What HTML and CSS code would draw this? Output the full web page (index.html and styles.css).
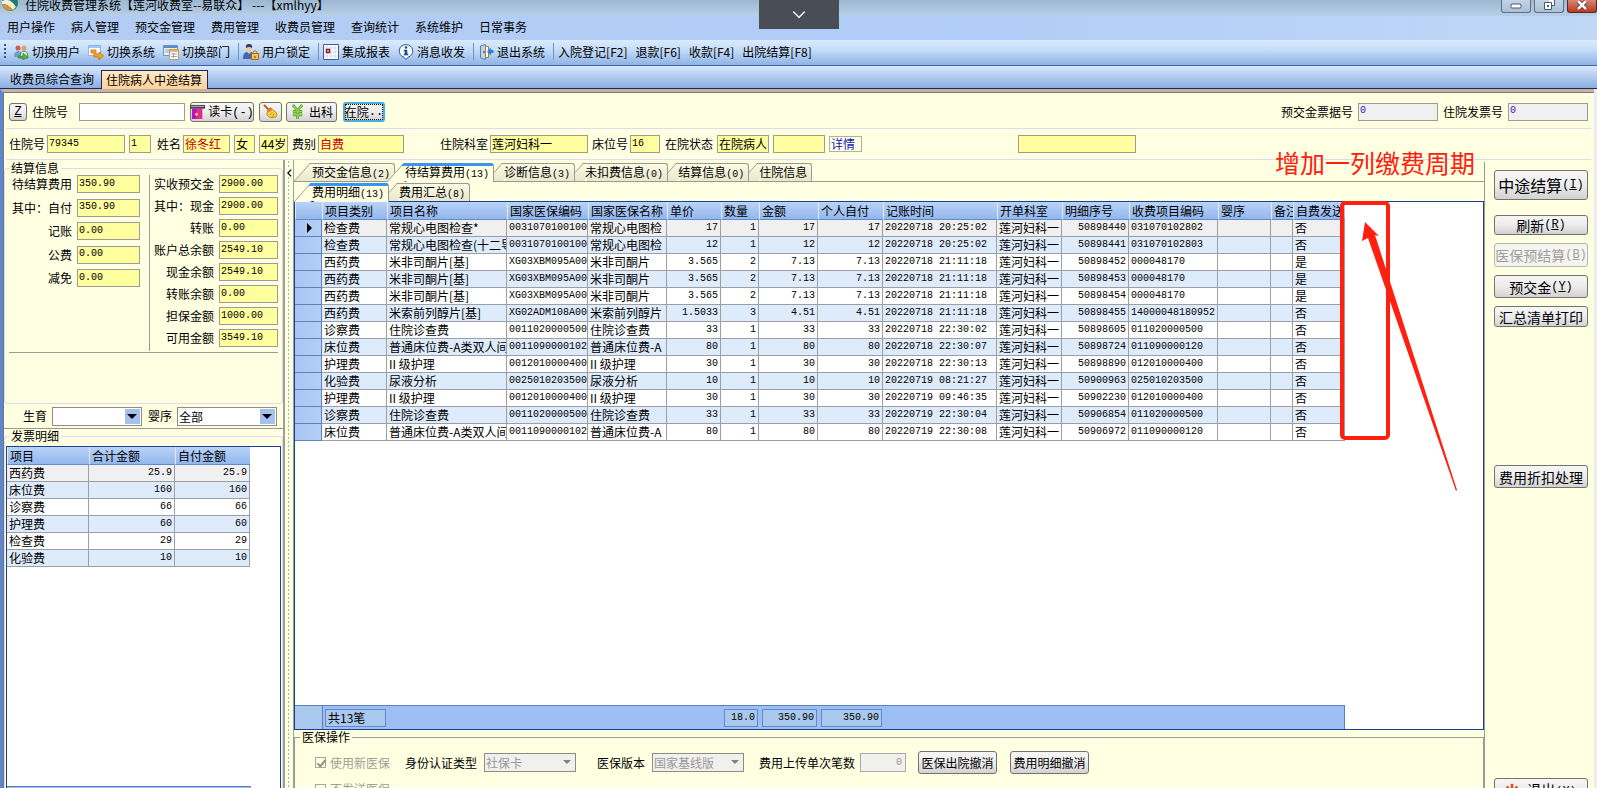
FILE: index.html
```html
<!DOCTYPE html>
<html lang="zh-CN">
<head>
<meta charset="utf-8">
<title>住院收费管理系统</title>
<link rel="stylesheet" href="styles.css">
</head>
<body>
<div class="app">
<header class="titlebar">
  <svg class="logo" viewBox="0 0 16 16"><circle cx="8" cy="8" r="8" fill="#1d7d62"/><path d="M0 6Q8 2 14 12L11 15Q5 8 0 9Z" fill="#f3efd4"/><path d="M0 9Q6 9 11 15Q3 18 0 9Z" fill="#e08f30"/></svg>
  <span class="title">住院收费管理系统【莲河收费室--易联众】 ---【xmlhyy】</span>
  <div class="winbtns">
    <button class="win" aria-label="最小化"><svg viewBox="0 0 16 12"><rect x="3" y="5" width="10" height="4" rx="1" fill="#fff" stroke="#4b5866"/></svg></button>
    <button class="win" aria-label="还原"><svg viewBox="0 0 16 12"><path d="M7.500 .5h6v6h-3" fill="#fff" stroke="#4b5866"/><path d="M3.500 3.500h7v7h-7z" fill="#fff" stroke="#4b5866"/><path d="M6 6h2v2h-2z" fill="#4b5866"/></svg></button>
    <button class="win close" aria-label="关闭"><svg viewBox="0 0 16 12"><path d="M4 2l8 8M12 2l-8 8" stroke="#5d2a22" stroke-width="4"/><path d="M4 2l8 8M12 2l-8 8" stroke="#fff" stroke-width="2.500"/></svg></button>
  </div>
</header>
<button class="handle" aria-label="展开"><svg viewBox="0 0 12 8"><path d="M1 1l5 5 5-5" fill="none" stroke="#e8eaec" stroke-width="1.300"/></svg></button>
<nav class="menubar"><a href="#">用户操作</a><a href="#">病人管理</a><a href="#">预交金管理</a><a href="#">费用管理</a><a href="#">收费员管理</a><a href="#">查询统计</a><a href="#">系统维护</a><a href="#">日常事务</a></nav>
<div class="toolbar">
  <span class="grip"></span>
  <button><svg viewBox="0 0 16 16"><circle cx="5" cy="4" r="2.500" fill="#d95b43"/><path d="M1 13q0-6 4-6t4 6z" fill="#6f9fd0"/><circle cx="11" cy="4" r="2.500" fill="#e0a070"/><path d="M7 14q0-7 4-7t4 7z" fill="#eee" stroke="#4c8b45"/><path d="M5 12h5v-3l5 4-5 3v-2H5z" fill="#4fb144" stroke="#277024" stroke-width=".5"/></svg>切换用户</button>
  <button><svg viewBox="0 0 16 16"><path d="M.5 1.500h12v10H.5z" fill="#fff" stroke="#8ab8e8"/><path d="M1 2h11v2H1z" fill="#9cc7f3"/><path d="M3 6h5v4h3V8l4.500 4-4.500 4v-3H6V9H3z" fill="#f7a823" stroke="#c26a10" stroke-width=".8"/></svg>切换系统</button>
  <button><svg viewBox="0 0 16 16"><path d="M.5 1.500h14v10H.5z" fill="#e8f0fa" stroke="#6c93c8"/><path d="M1 2h13v2H1z" fill="#5b8ad0"/><path d="M2 6h5M2 8h5" stroke="#8aa9d2"/><path d="M6.500 5.500h9v10h-9z" fill="#fff" stroke="#c19a55"/><path d="M7 6h8v2H7z" fill="#f3b65b"/><path d="M8 10h6M8 12.500h6M10.500 9v5" stroke="#93a7bf"/></svg>切换部门</button>
  <i class="sep"></i>
  <button><svg viewBox="0 0 16 16"><path d="M3 3q0-3 3-3t3 3v3q-1 2-3 2T3 6z" fill="#f1c9a0"/><path d="M3 4q-1-4 3-4t3 4q-3-2-6 0" fill="#35405c"/><path d="M0 15q0-7 4-7l2 2 2-2q3 0 4 7z" fill="#4169b0"/><path d="M10 10V8q2-3 4 0v2" fill="none" stroke="#b87b18"/><path d="M8.500 9.500h7v6h-7z" fill="#f6c052" stroke="#a96815"/><path d="M12 12v2" stroke="#5e3a0b"/></svg>用户锁定</button>
  <i class="sep"></i>
  <button><svg viewBox="0 0 16 16"><path d="M.5.5h15v15H.5z" fill="#fff" stroke="#4858a0"/><path d="M1 4h14M1 8h14M1 12h14M4 1v14M8 1v14M12 1v14" stroke="#b8c8ea" stroke-width=".6"/><path d="M3.500 5.500h3v3h-3z" fill="#fff" stroke="#802020" stroke-width="1.500"/></svg>集成报表</button>
  <button><svg viewBox="0 0 16 16"><path d="M8 .7a6.800 6.400 0 0 1 2 12.500L8 15.500l-2-2.300A6.800 6.400 0 0 1 8 .7z" fill="#f8fbff" stroke="#28579d"/><circle cx="8" cy="3.500" r="1.300" fill="#1d4da0"/><path d="M6 6h3v4h1v1H6v-1h1V7H6z" fill="#1d4da0" stroke="#1d4da0" stroke-width=".6"/></svg>消息收发</button>
  <i class="sep"></i>
  <button><svg viewBox="0 0 16 16"><path d="M2.500 2l5-1.500v15L2.500 14z" fill="#bcd5f1" stroke="#607fa8"/><path d="M7.500 2.500h3v11h-3z" fill="#fff" stroke="#b4772b"/><circle cx="6" cy="8" r="1" fill="#496b94"/><path d="M15.500 6v3H13v2.500L9 7.500l4-4V6z" fill="#2584df"/></svg>退出系统</button>
  <i class="sep"></i>
  <button>入院登记[F2]</button><button>退款[F6]</button><button>收款[F4]</button><button>出院结算[F8]</button>
</div>
<div class="doctabs"><button>收费员综合查询</button><button class="on">住院病人中途结算</button></div>

<main class="page">
<section class="row search">
  <button class="btn z"><u>Z</u></button>
  <label for="zyh">住院号</label><input id="zyh" class="white w106">
  <button class="btn read"><svg viewBox="0 0 16 16"><path d="M0 1h16v4H0z" fill="#444"/><path d="M1 2h14v1H1z" fill="#bbb"/><path d="M2 5h11v11H2z" fill="#b312c8"/><path d="M7 5h6v11H7z" fill="#e32a86"/><path d="M7 9l2 2-2 2-2-2z" fill="#ffc84a"/></svg><span>读卡<span class="k">(-)</span></span></button>
  <button class="btn broom" aria-label="清除"><svg viewBox="0 0 16 16"><path d="M1 1l5 5" stroke="#a85a20" stroke-width="2"/><path d="M5 6l3-2 6 5q2 4-1 5-6 2-9-3z" fill="#f5d040" stroke="#b88718"/><path d="M5 6l3-2 2 2-4 3z" fill="#e47b34"/><path d="M7 12l3-3M10 14l2-4" stroke="#c7981c"/></svg></button>
  <button class="btn out"><svg viewBox="0 0 16 16"><path d="M3 1l5 6 5-6M3 8h10M3 11.500h10M8 7v9" fill="none" stroke="#5aa52c" stroke-width="3"/><path d="M3 1l5 6 5-6M3 8h10M3 11.500h10M8 7v9" fill="none" stroke="#8dd24e" stroke-width="1.500"/></svg>出科</button>
  <button class="btn inhos">在院<span class="k">..</span></button>
  <div class="receipt">
    <label for="yj">预交金票据号</label><input id="yj" class="gray w80 num" value="0">
    <label for="fp">住院发票号</label><input id="fp" class="gray w80 num" value="0">
  </div>
</section>
<section class="row patient">
  <label for="p1">住院号</label><input id="p1" class="w78 num" value="79345" readonly>
  <input class="w22 num" value="1" aria-label="次数" readonly>
  <label for="p2" class="name">姓名</label><input id="p2" class="w47 red" value="徐冬红" readonly>
  <input class="w21" value="女" aria-label="性别" readonly>
  <input class="w29" value="44岁" aria-label="年龄" readonly>
  <label for="p3">费别</label><input id="p3" class="w86 red" value="自费" readonly>
  <label for="p4" class="dept">住院科室</label><input id="p4" class="w98" value="莲河妇科一" readonly>
  <label for="p5">床位号</label><input id="p5" class="w30 num" value="16" readonly>
  <label for="p6" class="state">在院状态</label><input id="p6" class="w52" value="在院病人" readonly>
  <input class="w52" aria-label="备注" readonly>
  <a class="detail" href="#">详情</a>
  <input class="w118 extra" aria-label="其他" readonly>
</section>

<div class="work">
<aside class="left">
  <fieldset class="info"><legend>结算信息</legend>
    <div class="sums">
      <div class="col five">
        <label for="a1">待结算费用</label><input id="a1" value="350.90" readonly>
        <label for="a2">其中：自付</label><input id="a2" value="350.90" readonly>
        <label for="a3">记账</label><input id="a3" value="0.00" readonly>
        <label for="a4">公费</label><input id="a4" value="0.00" readonly>
        <label for="a5">减免</label><input id="a5" value="0.00" readonly>
      </div>
      <div class="col eight">
        <label for="b1">实收预交金</label><input id="b1" value="2900.00" readonly>
        <label for="b2">其中：现金</label><input id="b2" value="2900.00" readonly>
        <label for="b3">转账</label><input id="b3" value="0.00" readonly>
        <label for="b4">账户总余额</label><input id="b4" value="2549.10" readonly>
        <label for="b5">现金余额</label><input id="b5" value="2549.10" readonly>
        <label for="b6">转账余额</label><input id="b6" value="0.00" readonly>
        <label for="b7">担保金额</label><input id="b7" value="1000.00" readonly>
        <label for="b8">可用金额</label><input id="b8" value="3549.10" readonly>
      </div>
    </div>
  </fieldset>
  <div class="filters">
    <label for="sy">生育</label><span class="sel s90"><select id="sy"><option></option></select></span>
    <label for="yx">婴序</label><span class="sel s100"><select id="yx"><option>全部</option></select></span>
  </div>
  <fieldset class="invoice"><legend>发票明细</legend>
    <div class="box">
      <table class="grid small">
        <colgroup><col class="i1"><col class="i2"><col class="i3"></colgroup>
        <thead><tr><th>项目</th><th>合计金额</th><th>自付金额</th></tr></thead>
        <tbody>
        <tr><td>西药费</td><td class="r">25.9</td><td class="r">25.9</td></tr>
        <tr><td>床位费</td><td class="r">160</td><td class="r">160</td></tr>
        <tr><td>诊察费</td><td class="r">66</td><td class="r">66</td></tr>
        <tr><td>护理费</td><td class="r">60</td><td class="r">60</td></tr>
        <tr><td>检查费</td><td class="r">29</td><td class="r">29</td></tr>
        <tr><td>化验费</td><td class="r">10</td><td class="r">10</td></tr>
        </tbody>
      </table>
      <div class="smallfoot"></div>
    </div>
  </fieldset>
</aside>
<div class="splitter"><svg viewBox="0 0 6 8"><path d="M5 0L1 4l4 4" fill="none" stroke="#000" stroke-width="1.500"/></svg></div>
<section class="center">
  <div class="tabs">
    <button class="tab t1">预交金信息<span class="n">(2)</span></button><button class="tab t2 on">待结算费用<span class="n">(13)</span></button><button class="tab t3">诊断信息<span class="n">(3)</span></button><button class="tab t4">未扣费信息<span class="n">(0)</span></button><button class="tab t5">结算信息<span class="n">(0)</span></button><button class="tab t6">住院信息</button>
  </div>
  <div class="tabs sub">
    <button class="tab t1 on">费用明细<span class="n">(13)</span></button><button class="tab t3">费用汇总<span class="n">(8)</span></button>
  </div>
  <div class="box main">
    <table class="grid">
      <colgroup><col class="c0"><col class="c1"><col class="c2"><col class="c3"><col class="c4"><col class="c5"><col class="c6"><col class="c7"><col class="c8"><col class="c9"><col class="c10"><col class="c11"><col class="c12"><col class="c13"><col class="c14"><col class="c15"></colgroup>
      <thead><tr><th></th><th>项目类别</th><th>项目名称</th><th>国家医保编码</th><th>国家医保名称</th><th>单价</th><th>数量</th><th>金额</th><th>个人自付</th><th>记账时间</th><th>开单科室</th><th>明细序号</th><th>收费项目编码</th><th>婴序</th><th>备注</th><th>自费发送</th></tr></thead>
      <tbody>
      <tr><td class="h"><i class="cur"></i></td><td>检查费</td><td>常规心电图检查*</td><td class="m">0031070100100</td><td>常规心电图检</td><td class="r">17</td><td class="r">1</td><td class="r">17</td><td class="r">17</td><td class="m">20220718 20:25:02</td><td>莲河妇科一</td><td class="r">50898440</td><td class="m">031070102802</td><td></td><td></td><td>否</td></tr>
      <tr><td class="h"></td><td>检查费</td><td>常规心电图检查(十二导</td><td class="m">0031070100100</td><td>常规心电图检</td><td class="r">12</td><td class="r">1</td><td class="r">12</td><td class="r">12</td><td class="m">20220718 20:25:02</td><td>莲河妇科一</td><td class="r">50898441</td><td class="m">031070102803</td><td></td><td></td><td>否</td></tr>
      <tr><td class="h"></td><td>西药费</td><td>米非司酮片[基]</td><td class="m">XG03XBM095A00</td><td>米非司酮片</td><td class="r">3.565</td><td class="r">2</td><td class="r">7.13</td><td class="r">7.13</td><td class="m">20220718 21:11:18</td><td>莲河妇科一</td><td class="r">50898452</td><td class="m">000048170</td><td></td><td></td><td>是</td></tr>
      <tr><td class="h"></td><td>西药费</td><td>米非司酮片[基]</td><td class="m">XG03XBM095A00</td><td>米非司酮片</td><td class="r">3.565</td><td class="r">2</td><td class="r">7.13</td><td class="r">7.13</td><td class="m">20220718 21:11:18</td><td>莲河妇科一</td><td class="r">50898453</td><td class="m">000048170</td><td></td><td></td><td>是</td></tr>
      <tr><td class="h"></td><td>西药费</td><td>米非司酮片[基]</td><td class="m">XG03XBM095A00</td><td>米非司酮片</td><td class="r">3.565</td><td class="r">2</td><td class="r">7.13</td><td class="r">7.13</td><td class="m">20220718 21:11:18</td><td>莲河妇科一</td><td class="r">50898454</td><td class="m">000048170</td><td></td><td></td><td>是</td></tr>
      <tr><td class="h"></td><td>西药费</td><td>米索前列醇片[基]</td><td class="m">XG02ADM108A00</td><td>米索前列醇片</td><td class="r">1.5033</td><td class="r">3</td><td class="r">4.51</td><td class="r">4.51</td><td class="m">20220718 21:11:18</td><td>莲河妇科一</td><td class="r">50898455</td><td class="m">14000048180952</td><td></td><td></td><td>否</td></tr>
      <tr><td class="h"></td><td>诊察费</td><td>住院诊查费</td><td class="m">0011020000500</td><td>住院诊查费</td><td class="r">33</td><td class="r">1</td><td class="r">33</td><td class="r">33</td><td class="m">20220718 22:30:02</td><td>莲河妇科一</td><td class="r">50898605</td><td class="m">011020000500</td><td></td><td></td><td>否</td></tr>
      <tr><td class="h"></td><td>床位费</td><td>普通床位费-A类双人间</td><td class="m">0011090000102</td><td>普通床位费-A</td><td class="r">80</td><td class="r">1</td><td class="r">80</td><td class="r">80</td><td class="m">20220718 22:30:07</td><td>莲河妇科一</td><td class="r">50898724</td><td class="m">011090000120</td><td></td><td></td><td>否</td></tr>
      <tr><td class="h"></td><td>护理费</td><td>II 级护理</td><td class="m">0012010000400</td><td>II 级护理</td><td class="r">30</td><td class="r">1</td><td class="r">30</td><td class="r">30</td><td class="m">20220718 22:30:13</td><td>莲河妇科一</td><td class="r">50898890</td><td class="m">012010000400</td><td></td><td></td><td>否</td></tr>
      <tr><td class="h"></td><td>化验费</td><td>尿液分析</td><td class="m">0025010203500</td><td>尿液分析</td><td class="r">10</td><td class="r">1</td><td class="r">10</td><td class="r">10</td><td class="m">20220719 08:21:27</td><td>莲河妇科一</td><td class="r">50900963</td><td class="m">025010203500</td><td></td><td></td><td>否</td></tr>
      <tr><td class="h"></td><td>护理费</td><td>II 级护理</td><td class="m">0012010000400</td><td>II 级护理</td><td class="r">30</td><td class="r">1</td><td class="r">30</td><td class="r">30</td><td class="m">20220719 09:46:35</td><td>莲河妇科一</td><td class="r">50902230</td><td class="m">012010000400</td><td></td><td></td><td>否</td></tr>
      <tr><td class="h"></td><td>诊察费</td><td>住院诊查费</td><td class="m">0011020000500</td><td>住院诊查费</td><td class="r">33</td><td class="r">1</td><td class="r">33</td><td class="r">33</td><td class="m">20220719 22:30:04</td><td>莲河妇科一</td><td class="r">50906854</td><td class="m">011020000500</td><td></td><td></td><td>否</td></tr>
      <tr><td class="h"></td><td>床位费</td><td>普通床位费-A类双人间</td><td class="m">0011090000102</td><td>普通床位费-A</td><td class="r">80</td><td class="r">1</td><td class="r">80</td><td class="r">80</td><td class="m">20220719 22:30:08</td><td>莲河妇科一</td><td class="r">50906972</td><td class="m">011090000120</td><td></td><td></td><td>否</td></tr>
      </tbody>
    </table>
    <div class="totals"><span class="corner"></span><output class="count">共13笔</output><output class="qty">18.0</output><output class="amt">350.90</output><output class="self">350.90</output></div>
  </div>
  <fieldset class="medical"><legend>医保操作</legend>
    <div class="medrow">
      <label class="chk"><input type="checkbox" checked disabled>使用新医保</label>
      <label for="m1">身份认证类型</label><span class="sel dis s92"><select id="m1" disabled><option>社保卡</option></select></span>
      <label for="m2" class="ver">医保版本</label><span class="sel dis s92"><select id="m2" disabled><option>国家基线版</option></select></span>
      <label for="m3" class="cnt">费用上传单次笔数</label><input id="m3" class="w46 num" value="0" disabled>
      <button class="btn med">医保出院撤消</button><button class="btn med">费用明细撤消</button>
    </div>
    <label class="chk"><input type="checkbox" disabled>不发送医保</label>
  </fieldset>
</section>
<aside class="actions">
  <button class="btn big">中途结算<span class="k">(<u>I</u>)</span></button>
  <button class="btn short">刷新<span class="k">(<u>R</u>)</span></button>
  <button class="btn tall" disabled>医保预结算<span class="k">(<u>B</u>)</span></button>
  <button class="btn mid">预交金<span class="k">(<u>Y</u>)</span></button>
  <button class="btn">汇总清单打印</button>
  <button class="btn mid discount">费用折扣处理</button>
  <button class="btn exit"><svg viewBox="0 0 16 16"><path d="M4 4q-4 4 0 8 4 3 8 0 4-4 0-8" fill="none" stroke="#d8521c" stroke-width="3"/><path d="M8 1v7" stroke="#d8521c" stroke-width="3"/></svg><span>退出<span class="k">(<u>X</u>)</span></span></button>
</aside>
</div>
</main>
</div>
<div class="note">增加一列缴费周期</div>
<svg class="mark" viewBox="0 0 120 292" aria-hidden="true"><rect x="2" y="2" width="46" height="235" rx="3" fill="none" stroke="#ff2010" stroke-width="4"/><path d="M25 21L39 35 35 34 117 289 116 290 28 37 22 40Z" fill="#ff2010"/></svg>
</body>
</html>
```
FILE: styles.css
```css
* { box-sizing: border-box; }
html, body { height: 100%; overflow: hidden; }
body { position: relative; margin: 0; color: #000; background: #ffffe1; font: 12px/16px "Noto Sans CJK SC", sans-serif; }
button, input, select { margin: 0; font: inherit; color: inherit; }
button { padding: 0; border: 0; background: none; white-space: nowrap; }
a { color: inherit; text-decoration: none; }
svg { display: block; flex: none; }
label { white-space: nowrap; }
fieldset { margin: 0; padding: 0; min-width: 0; border: 1px solid #dcdce6; border-radius: 3px; }
legend { margin-left: 4px; padding: 0 2px; line-height: 14px; }
.n, .num { font-family: "Liberation Mono", monospace; font-size: 10px; }
.k { font-family: "Liberation Mono", monospace; font-size: 12px; }

/* the window runs past the bottom of the screen */
.app { display: flex; flex-direction: column; height: calc(100% + 30px); }

.titlebar { display: flex; height: 16px; padding-left: 2px; overflow: hidden; background: linear-gradient(#9db8d2, #b8cfe8); }
.logo { width: 16px; height: 16px; margin-top: -5px; }
.title { margin: -3px 0 0 7px; }
.winbtns { display: flex; gap: 3px; margin-left: auto; }
.win { display: flex; justify-content: center; width: 30px; height: 13px; border: 1px solid #5d7187; border-top: 0; border-radius: 0 0 3px 3px; background: linear-gradient(#c3d4e6, #a9c0d8); }
.win svg { width: 16px; height: 12px; margin-top: -1px; }
.close { border-color: #5b2520; background: linear-gradient(#d98776, #b8391f); }
.handle { position: absolute; left: 759px; top: 0; z-index: 5; display: flex; align-items: center; justify-content: center; width: 80px; height: 29px; background: #494d55; }
.handle svg { width: 14px; height: 10px; }

.menubar { display: flex; gap: 16px; height: 24px; padding-left: 7px; line-height: 22px; background: linear-gradient(90deg, #b4ccf3, #b0cdf8 60%, #c0d7f6); }
.toolbar { display: flex; align-items: center; height: 26px; padding: 0 4px 2px; background: linear-gradient(#dcebfe, #c4dcf9 40%, #8fb3e4); border-bottom: 1px solid #3e639f; }
.toolbar button { display: flex; align-items: center; gap: 3px; margin-right: 8px; }
.toolbar svg { width: 16px; height: 16px; }
.grip { width: 2px; height: 15px; margin-right: 7px; background: repeating-linear-gradient(#39597f 0 2px, transparent 2px 4px); }
.sep { width: 1px; height: 17px; margin-right: 4px; background: #6f94c4; }
.doctabs { display: flex; align-items: flex-end; height: 23px; padding-left: 2px; background: linear-gradient(#d8e8fd, #8aaee2); border-bottom: 1px solid #1f2464; }
.doctabs button { height: 18px; padding: 0 7px 0 8px; }
.doctabs .on { height: 19px; margin-bottom: -1px; padding: 0 5px 0 4px; border: 1px solid #1f2464; border-bottom: 0; background: linear-gradient(#ffeac6, #ffd29a); }

.page { display: flex; flex-direction: column; flex: 1; min-height: 0; margin-right: 3px; border-left: 3px solid #5a86d2; border-top: 3px solid #c9b2a2; background: #ffffe1; box-shadow: inset 1px 1px 0 #777, 3px 0 0 #e8eef0; }
.row { display: flex; align-items: center; margin: 0 3px; border-bottom: 1px solid #dcdcee; }
.row input, .col input { height: 18px; padding: 0 0 2px 1px; border: 1px solid #9c9c94; background: #ffff9f; outline: 0; border-radius: 0; }
.search { height: 37px; padding: 3px 3px 0; }
.search .white { height: 18px; margin: 0 5px 0 11px; background: #fff; }
.search .gray { background: #f0f0f0; color: #3a17b8; }
.w21 { width: 21px; } .w22 { width: 22px; } .w29 { width: 29px; } .w30 { width: 30px; } .w46 { width: 46px; } .w47 { width: 47px; } .w52 { width: 52px; } .w78 { width: 78px; } .w80 { width: 80px; } .w86 { width: 86px; } .w98 { width: 98px; } .w106 { width: 106px; } .w118 { width: 118px; }
.btn { display: flex; align-items: center; justify-content: center; height: 20px; border: 1px solid #73736e; border-radius: 3px; background: linear-gradient(#f6f6f6, #ececec 50%, #d2d2d2); }
.z { width: 18px; height: 18px; margin-right: 5px; font-family: "Liberation Mono", monospace; }
.read { gap: 3px; width: 64px; margin-right: 5px; }
.broom { width: 23px; margin-right: 4px; }
.out { gap: 4px; width: 51px; margin-right: 6px; }
.search svg { width: 15px; height: 15px; }
.inhos { width: 42px; border: 2px solid #48b0d8; outline: 1px dotted #000; outline-offset: -3px; }
.receipt { display: flex; align-items: center; gap: 5px; margin-left: auto; }
.patient { height: 31px; gap: 4px; padding-left: 3px; }
.patient label { margin-right: -2px; }
.patient .red { color: #c80000; }
.patient .name { margin-left: 2px; }
.patient .dept { margin-left: 32px; }
.patient .state { margin: 0 0 0 1px; }
.detail { width: 33px; height: 16px; border: 1px solid #b0b0a8; color: #1414c0; padding-left: 1px; line-height: 14px; }
.patient .extra { margin-left: 152px; }

.work { display: flex; flex: 1; min-height: 0; }
.left { display: flex; flex-direction: column; width: 282px; padding: 1px 0 0 1px; border-right: 2px solid #a09e98; }
.info { height: 243px; }
.sums { display: flex; margin: 0 4px; border-bottom: 1px solid #9c9a94; height: 178px; }
.col { display: grid; align-items: start; column-gap: 5px; text-align: right; }
.col input { width: 100%; font: 10px "Liberation Mono", monospace; }
.col label { line-height: 18px; }
.five { grid-template: repeat(5, 1fr) / 63px 63px; width: 141px; height: 118px; }
.eight { grid-template: repeat(8, 1fr) / 64px 59px; height: 176px; border-left: 1px solid #9c9a94; }
.filters { display: flex; align-items: center; height: 25px; padding-left: 19px; border-bottom: 1px solid #9c9a94; }
.filters .sel { margin: 0 6px 0 5px; }
.sel { position: relative; display: flex; height: 19px; }
.sel select { width: 100%; appearance: none; padding: 0 1px; border: 1px solid #8c8c88; border-radius: 0; background: #fff; line-height: 15px; }
.sel::before { content: ""; position: absolute; right: 2px; top: 2px; bottom: 2px; width: 15px; background: #a4c1f0; }
.sel::after { content: ""; position: absolute; right: 5px; top: 7px; border: 5px solid transparent; border-top-color: #000; border-bottom: 0; }
.s90 { width: 90px; } .s92 { width: 92px; } .s100 { width: 100px; }
.sel.dis::before { display: none; }
.sel.dis::after { border-width: 4px; border-top-color: #808080; border-bottom: 0; }
.sel.dis select { background: #f0f0ec; color: #999; opacity: 1; }
.invoice { display: flex; flex-direction: column; flex: 1; border-bottom: 0; }
.box { display: flex; flex-direction: column; flex: 1; min-height: 0; background: #fff; border: 1px solid #1c3f8f; }
.invoice .box { margin: 3px 1px 5px 1px; height: calc(100% - 8px); }
.smallfoot { width: 244px; height: 26px; margin-top: auto; background: #9dbdf2; border-top: 1px solid #5a80c4; }

.grid { table-layout: fixed; width: 1050px; border-spacing: 0; }
.grid.small { width: 243px; }
.grid th { height: 18px; padding: 0 0 0 2px; overflow: hidden; font-weight: 400; line-height: 16px; text-align: left; white-space: nowrap; background: linear-gradient(#b9d3f8, #93b7ec); border-bottom: 1px solid #5f8bd0; border-left: 1px solid #dfeafb; }
.grid td { height: 17px; padding: 0 2px; overflow: hidden; line-height: 16px; white-space: nowrap; border-right: 1px solid #9ca0a6; border-bottom: 1px solid #9ca0a6; }
.grid tbody tr:nth-child(even) { background: #deebfb; }
.grid tbody tr:first-child { background: #f1f0f0; }
.grid .r, .grid .m { font-family: "Liberation Mono", monospace; font-size: 10px; }
.grid .r { text-align: right; }
.grid .h { background: linear-gradient(90deg, #a7c6f3, #b5cff5); border-color: #5f83b8; }
.cur { display: block; width: 0; margin-left: 10px; border: 5px solid transparent; border-left-color: #000; border-right: 0; }
.i1 { width: 82px; } .i2 { width: 86px; } .i3 { width: 75px; }
.c0 { width: 27px; } .c1 { width: 65px; } .c2 { width: 120px; } .c3 { width: 81px; } .c4 { width: 79px; } .c5 { width: 54px; } .c6 { width: 38px; } .c7 { width: 59px; } .c8 { width: 65px; } .c9 { width: 114px; } .c10 { width: 65px; } .c11 { width: 67px; } .c12 { width: 89px; } .c13 { width: 53px; } .c14 { width: 22px; } .c15 { width: 52px; }

.splitter { width: 9px; padding: 9px 1px 0 2px; border-right: 1px solid #a09e98; background: radial-gradient(circle, #86c4b4 1px, transparent 1px) 2px 0 / 3px 4px repeat-y; }
.splitter svg { width: 5px; height: 8px; background: #ffffe1; }
.center { display: flex; flex-direction: column; flex: 1; min-width: 0; padding: 3px 0 0 0; }
.tabs { display: flex; height: 19px; border-bottom: 1px solid #9c9a90; }
.sub { border-bottom: 0; margin-top: 1px; height: 18px; }
.tab { position: relative; height: 18px; padding: 0 5px 0 10px; line-height: 18px; }
.tab.t1 { padding-left: 18px; z-index: 6; }
.t2 { z-index: 7; } .t3 { z-index: 4; } .t4 { z-index: 3; } .t5 { z-index: 2; } .t6 { z-index: 1; }
.tab::before, .tab::after { content: ""; position: absolute; z-index: -1; top: 0; bottom: 0; border: 0 solid #9c9a90; border-top-width: 1px; background: linear-gradient(#fbfae4, #e9e8cc); }
.tab::before { left: 0; width: 16px; border-left-width: 1px; transform: skewX(-42deg); }
.t1::before { left: 8px; }
.tab::after { left: 20px; right: 0; border-right-width: 1px; border-radius: 0 3px 0 0; }
.t2::after, .t3::after, .t4::after, .t5::after, .t6::after { left: 12px; }
.tab.on::before, .tab.on::after { bottom: -1px; border-top: 3px solid #3a94f4; background: #ffffe1; }
.totals { display: flex; align-items: center; width: 1050px; height: 24px; margin-top: auto; background: #9dbff5; border-top: 1px solid #5a80c4; border-right: 1px solid #5a80c4; }
.totals .corner { width: 28px; align-self: stretch; background: #a9c8ee; border-right: 1px solid #5a80c4; }
.totals output { height: 18px; padding: 0 2px; border: 1px solid #6488c8; background: #a9c8ee; line-height: 16px; }
.count { width: 61px; margin-left: 2px; }
.qty, .amt, .self { font-family: "Liberation Mono", monospace; font-size: 10px; text-align: right; }
.qty { width: 34px; margin-left: 338px; }
.amt { width: 55px; margin-left: 4px; }
.self { width: 61px; margin-left: 4px; }
.medical { height: 88px; border: 1px solid #9c9a94; border-radius: 0; padding: 0 20px; }
.medical legend { margin-left: -15px; }
.medrow { display: flex; align-items: center; height: 37px; }
.medrow .sel { margin-left: 7px; }
.medrow .ver { margin-left: 21px; }
.medrow .cnt { margin-left: 15px; }
.medrow input.w46 { height: 19px; margin: 0 12px 0 5px; padding: 0 3px; border: 1px solid #aaa; background: #f0f0ec; color: #999; text-align: right; }
.chk { display: flex; align-items: center; gap: 4px; margin-right: 15px; color: #a0a098; }
.chk input { appearance: none; position: relative; width: 11px; height: 11px; border: 1px solid #a8a8a0; }
.chk input:checked::after { content: ""; position: absolute; left: 3px; top: 0; width: 3px; height: 7px; border: solid #909088; border-width: 0 2px 2px 0; transform: rotate(40deg); }
.med { width: 79px; height: 23px; margin-right: 13px; }

.actions { display: flex; flex-direction: column; width: 110px; margin-top: 2px; padding: 8px 6px 8px 9px; border-left: 1px solid #9c9a94; font-size: 14px; }
.actions .btn { height: 21px; margin-bottom: 8px; }
.actions .big { height: 30px; margin-bottom: 15px; font-size: 16px; }
.actions .short { height: 20px; }
.actions .tall { height: 24px; }
.actions .mid { height: 23px; }
.actions .btn:disabled { color: #a0a0a0; border-color: #b4b4b0; background: #f4f4f0; }
.actions .discount { margin-top: 130px; }
.actions .exit { gap: 8px; height: 24px; margin: auto 0 8px; }
.exit svg { width: 14px; height: 14px; }

.note { position: absolute; z-index: 10; right: 122px; top: 145px; color: #ff2010; font-size: 25px; line-height: 34px; }
.mark { position: absolute; z-index: 10; right: 137px; top: 201px; width: 120px; height: 292px; }
```
